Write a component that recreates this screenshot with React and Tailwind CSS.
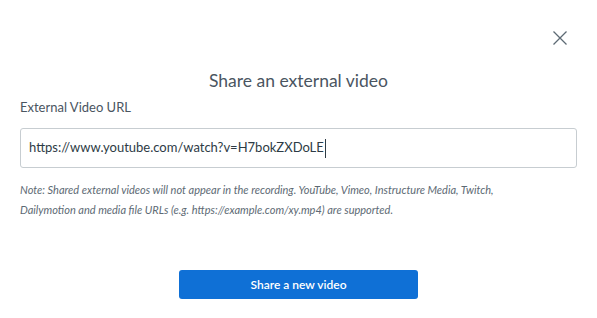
export default function App() {
  return (
    <div className="min-h-screen bg-white font-['Lato',sans-serif] text-[#2d3b45]">
      <div className="flex justify-end pr-[30px] pt-[31px]">
        <button type="button" className="w-[14px] h-[14px] text-[#5d6a74]" aria-label="Close">
          <svg viewBox="0 0 14 14" className="w-[14px] h-[14px]" fill="none" stroke="currentColor" strokeWidth="1.3">
            <path d="M0.5 0.5 L13.5 13.5 M13.5 0.5 L0.5 13.5" />
          </svg>
        </button>
      </div>

      <h2 className="text-center text-[17.5px] leading-[22px] text-[#4a5561] mt-[25px]">Share an external video</h2>

      <div className="px-5">
        <label className="block text-[13px] leading-[16px] text-[#4a5561] mt-[7px]">External Video URL</label>
        <div className="mt-[13px] h-[40px] border border-[#c7cdd1] rounded-[3px] flex items-center pl-[8px]">
          <span className="text-[13px] text-[#2d3b45]">https://www.youtube.com/watch?v=H7bokZXDoLE</span>
          <span className="w-px h-[19px] bg-[#2d3b45] ml-px"></span>
        </div>
        <p className="mt-[12px] max-w-[480px] text-[11px] leading-[20px] italic text-[#5d6a74]">
          Note: Shared external videos will not appear in the recording. YouTube, Vimeo, Instructure Media, Twitch, Dailymotion and media file URLs (e.g. https://example.com/xy.mp4) are supported.
        </p>
      </div>

      <div className="flex justify-center mt-[50px]">
        <button type="button" className="w-[239px] h-[29px] bg-[#0f70d6] rounded-[3px] text-white text-[12px] font-semibold">
          Share a new video
        </button>
      </div>
    </div>
  );
}
